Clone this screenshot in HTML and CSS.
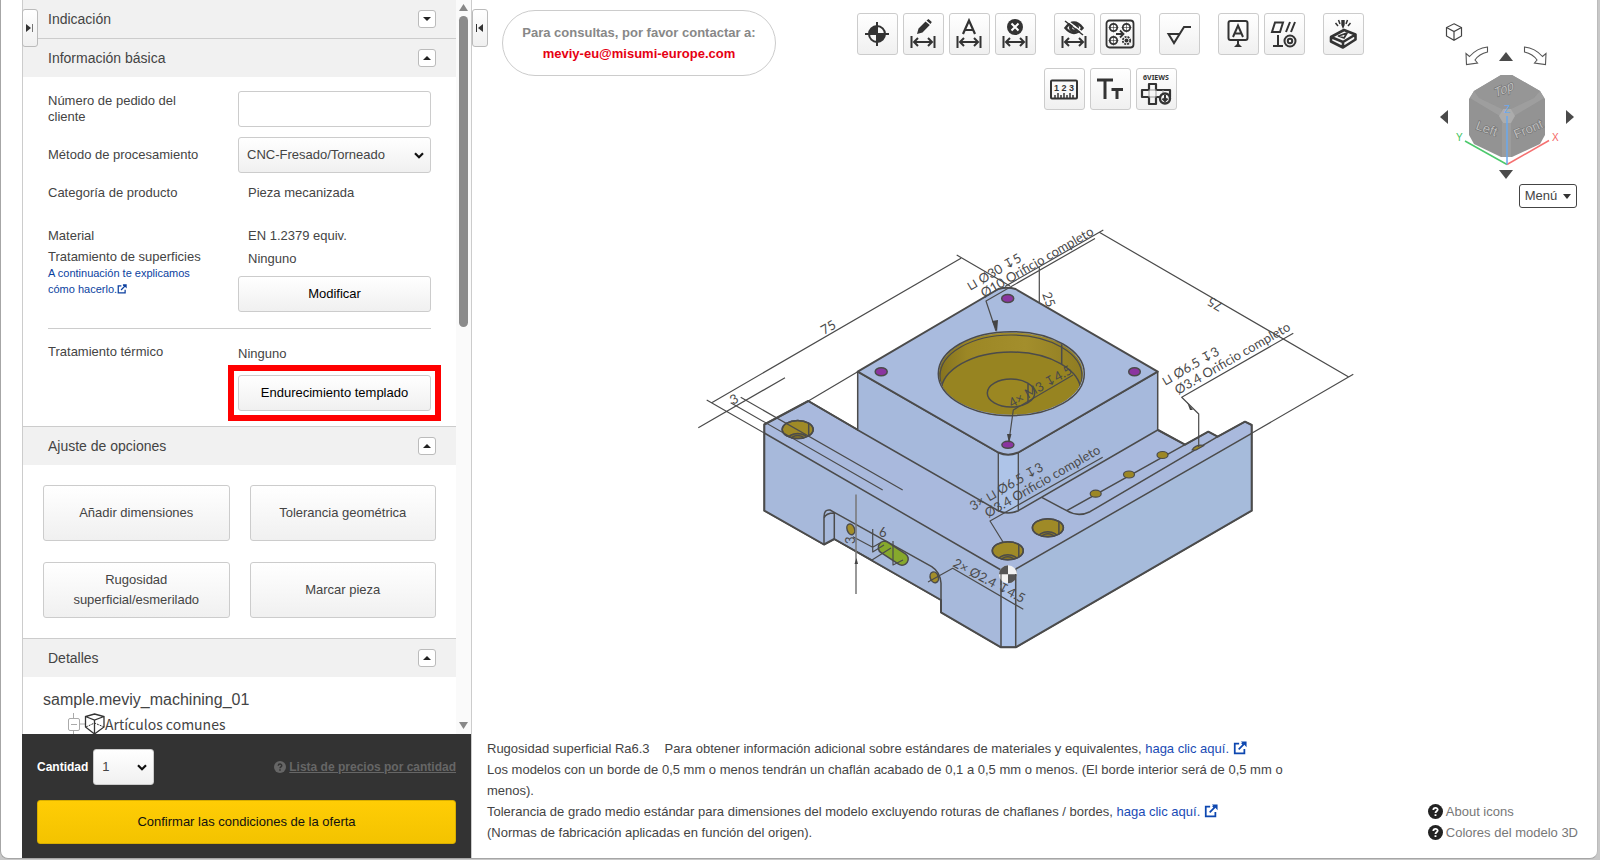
FILE: index.html
```html
<!DOCTYPE html>
<html lang="es">
<head>
<meta charset="utf-8">
<title>meviy</title>
<link rel="stylesheet" href="styles.css">
</head>
<body>
<div class="app">
  <svg class="defs" aria-hidden="true">
    <symbol id="ext" viewBox="0 0 16 16"><path d="M7 3H2v11h11V9M10 2L12 4L6.500 9.500" fill="none" stroke="currentColor" stroke-width="2"/><path d="M9 0.500H15.500V7L13.200 4.700L11.200 2.700Z" fill="currentColor"/></symbol>
    <symbol id="help" viewBox="0 0 16 16"><circle cx="8" cy="8" r="8" fill="currentColor"/><path class="help-mark" d="M5.700 6.300C5.700 3.400 10.400 3.500 10.300 6.200C10.200 7.800 8 7.700 8 9.500M8 10.900V12.900" fill="none" stroke-width="2"/></symbol>
    <symbol id="span" viewBox="0 0 32 12"><path d="M4.500 0V12M27.500 0V12M7 6H25M11 2L7 6L11 10M21 2L25 6L21 10" fill="none" stroke="currentColor" stroke-width="2"/></symbol>
  </svg>

  <aside class="panel">
    <button class="collapse collapse-left" aria-label="Mostrar panel"><svg width="8" height="8" viewBox="0 0 8 8"><path d="M0 0L5 4L0 8Z" fill="#333"/><path d="M6.500 0V8" stroke="#777"/></svg></button>
    <div class="scroll">
      <div class="sections">
        <section class="section">
          <h2 class="section-head">Indicación <button class="fold" aria-label="Abrir Indicación"><svg width="8" height="4" viewBox="0 0 8 4"><path d="M0 0H8L4 4Z" fill="#222"/></svg></button></h2>
        </section>
        <section class="section">
          <h2 class="section-head">Información básica <button class="fold" aria-label="Cerrar Información básica"><svg width="8" height="4" viewBox="0 0 8 4"><path d="M0 4H8L4 0Z" fill="#222"/></svg></button></h2>
          <div class="basic">
            <div class="row row-input"><label for="order">Número de pedido del cliente</label><input class="field" id="order" type="text"></div>
            <div class="row row-method"><label for="method">Método de procesamiento</label>
              <div class="select"><select class="field" id="method"><option>CNC-Fresado/Torneado</option></select><svg width="10" height="7" viewBox="0 0 10 7"><path d="M1 1.200L5 5.200L9 1.200" fill="none" stroke="#111" stroke-width="2.200"/></svg></div></div>
            <div class="row row-category"><span>Categoría de producto</span><span class="value">Pieza mecanizada</span></div>
            <div class="row row-material"><span>Material</span><span class="value">EN 1.2379 equiv.</span></div>
            <div class="row row-surface">
              <div>Tratamiento de superficies<a class="explain" href="#">A continuación te explicamos cómo hacerlo.<svg width="10" height="10"><use href="#ext"/></svg></a></div>
              <div class="stack"><span class="value">Ninguno</span><button class="field">Modificar</button></div>
            </div>
            <div class="row row-heat">
              <div>Tratamiento térmico</div>
              <div class="stack"><span>Ninguno</span><div class="marked"><button class="field">Endurecimiento templado</button></div></div>
            </div>
          </div>
        </section>
        <section class="section">
          <h2 class="section-head">Ajuste de opciones <button class="fold" aria-label="Cerrar Ajuste de opciones"><svg width="8" height="4" viewBox="0 0 8 4"><path d="M0 4H8L4 0Z" fill="#222"/></svg></button></h2>
          <div class="options">
            <button class="option">Añadir dimensiones</button><button class="option">Tolerancia geométrica</button>
            <button class="option">Rugosidad superficial/esmerilado</button><button class="option">Marcar pieza</button>
          </div>
        </section>
        <section class="section">
          <h2 class="section-head">Detalles <button class="fold" aria-label="Cerrar Detalles"><svg width="8" height="4" viewBox="0 0 8 4"><path d="M0 4H8L4 0Z" fill="#222"/></svg></button></h2>
          <div class="details">
            <div class="file">sample.meviy_machining_01</div>
            <div class="tree"><svg width="37" height="22" viewBox="0 0 37 22"><g fill="none" stroke="#aaa"><path d="M5.500 0V5M5.500 17V22M12 11H17"/><rect x="0.500" y="5.500" width="11" height="12" rx="1.500"/><path d="M3 11.500H9"/></g><path d="M26.500 1L36 3.500V14L26.500 21L17.500 14V3.500ZM17.500 3.500L26.500 7L36 3.500M26.500 7V21" fill="none" stroke="#333" stroke-width="1.300"/><path d="M18 14L26.500 10L36 14" fill="none" stroke="#333" stroke-dasharray="2 1"/></svg>Artículos comunes</div>
          </div>
        </section>
      </div>
      <div class="bar"><svg width="9" height="7" viewBox="0 0 9 7"><path d="M4.500 0L9 7H0Z" fill="#888"/></svg><i class="thumb"></i><svg class="down" width="9" height="7" viewBox="0 0 9 7"><path d="M4.500 7L9 0H0Z" fill="#888"/></svg></div>
    </div>
    <div class="order">
      <div class="quantity">
        <label for="qty">Cantidad</label>
        <div class="select"><select class="field" id="qty"><option>1</option></select><svg width="10" height="7" viewBox="0 0 10 7"><path d="M1 1.200L5 5.200L9 1.200" fill="none" stroke="#111" stroke-width="2.200"/></svg></div>
        <a class="prices" href="#"><svg width="12" height="12"><use href="#help"/></svg><span>Lista de precios por cantidad</span></a>
      </div>
      <button class="confirm">Confirmar las condiciones de la oferta</button>
    </div>
  </aside>

  <main class="viewer">
    <button class="collapse collapse-right" aria-label="Ocultar panel"><svg width="8" height="8" viewBox="0 0 8 8"><path d="M7 0L2 4L7 8Z" fill="#333"/><path d="M0.500 0V8" stroke="#333"/></svg></button>

    <svg class="model" viewBox="472 0 1125 858" role="img" aria-label="Modelo 3D">
      <defs>
        <linearGradient id="wall" x1="0" x2="1"><stop offset="0" stop-color="#84721f"/><stop offset=".2" stop-color="#9c8725"/><stop offset=".6" stop-color="#a38e2c"/><stop offset="1" stop-color="#8f7c22"/></linearGradient>
        <clipPath id="bore"><ellipse cx="1011" cy="373.500" rx="72" ry="41"/></clipPath>
        <clipPath id="cb"><ellipse cx="0" cy="0" rx="15.500" ry="9"/></clipPath>
        <g id="counterbore"><ellipse rx="15.500" ry="9" fill="#9f8a27"/><g clip-path="url(#cb)" fill="none"><ellipse cx="0" cy="10" rx="10" ry="6" fill="#8b7820"/><ellipse cx="0" cy="11" rx="7" ry="5"/><path d="M11 -8V7"/></g><ellipse rx="15.500" ry="9" fill="none"/></g>
      </defs>
      <g stroke="#4b4b4b" stroke-width="1.500" stroke-linejoin="round" fill="none">
        <path fill="#a9b9dd" d="M764.300 424.500L808.300 401L858 430L1158 430L1185 444.700L1208.300 431.700L1217.700 436.700L1245 421.700L1251.700 425V510.700L1015.700 647.300H1001L941 612.300V600L834.300 539L824 544.500L764.300 510.700Z"/>
        <path stroke="none" fill="#a7b9db" d="M764.300 433L1001 570V647L941 612V600L834 539L824 544L764.300 510.700Z"/>
        <path stroke="none" fill="#a6bbdb" d="M1015.700 569L1251.700 433V510.700L1015.700 647.300Z"/>
        <path fill="#adc3e8" d="M1001 570H1015.700V647.300H1001Z"/>
        <path stroke-width="2" d="M1158 430L1185 444.700L1208.300 431.700L1217.700 436.700L1245 421.700L1251.700 425V510.700L1015.700 647.300H1001L941 612.300V600L834.300 539L824 544.500L764.300 510.700V424.500L808.300 401L858 430"/>
        <path d="M764.300 433L1001 570M1015.700 569L1251.700 433.300"/>
        <path d="M1041.700 497.300L1066.700 510.700Q1078 517.500 1090 511.700L1217.700 436.700M1066.700 510.700L1185 444.700"/>
        <path d="M824 544.500V517Q824 509 830 510L834.300 512.300V539M824 518Q826 513 834 513M834.300 512.300L931.700 566.700Q940 572 941 583V600"/>
        <g fill="#9c8725" stroke-width="1.200"><ellipse cx="1095.700" cy="493.700" rx="5.500" ry="3.500"/><ellipse cx="1129" cy="474.500" rx="5.500" ry="3.500"/><ellipse cx="1162.500" cy="455" rx="5.500" ry="3.500"/><path d="M1192 450Q1196 444 1204 445.500L1196 450Z"/></g>
        <path fill="#a6b9dc" d="M857.700 371.700L998.300 452.500L1018.300 452.500L1157.700 371.700V430L1018.300 510.700Q1008 515 998.300 510.700L857.700 430Z"/>
        <path fill="#aec4e8" stroke-width="1.300" d="M998.300 452H1018.300V510.700Q1008 515 998.300 510.700Z"/>
        <path fill="#a9bbde" stroke-width="2" d="M857.700 371.700L998.300 289Q1007 286.500 1015.500 289L1157.700 371.700L1018.300 452.500Q1008 457 998.300 452.500Z"/>
        <g clip-path="url(#bore)"><ellipse cx="1011" cy="373.500" rx="73" ry="42" fill="url(#wall)"/><ellipse cx="1011" cy="392" rx="70" ry="40" fill="#978421"/><path d="M1061.700 341V364" /><ellipse cx="1011" cy="376" rx="71" ry="41" stroke-width="1.200"/></g>
        <ellipse cx="1011.300" cy="373.700" rx="73" ry="42"/>
        <ellipse cx="1011" cy="393" rx="23.700" ry="14" fill="#9b8722"/><path d="M1028 384V403"/>
        <g fill="#8b35a0"><ellipse cx="1007.700" cy="298.500" rx="6" ry="4"/><ellipse cx="881.200" cy="371.700" rx="6" ry="4"/><ellipse cx="1007.900" cy="444.800" rx="6" ry="3.500"/><ellipse cx="1134.500" cy="371.700" rx="5.800" ry="4"/></g>
        <use href="#counterbore" x="797.700" y="429.500"/><use href="#counterbore" x="1047.900" y="527.800"/><use href="#counterbore" x="1007.800" y="550.800"/>
        <g fill="#a38e2a"><ellipse cx="850.800" cy="529.300" rx="3.700" ry="5.500" transform="rotate(-20 850.800 529.300)"/><ellipse cx="934.300" cy="577.300" rx="4" ry="5.500" transform="rotate(-20 934.300 577.300)"/></g>
        <path d="M884.500 547.500L902 559" stroke-width="14" stroke-linecap="round"/><path d="M884.500 547.500L902 559" stroke="#86a82c" stroke-width="11" stroke-linecap="round"/>
        <g stroke-width="1.200">
          <path d="M711.700 402.700L961 258.300M706.700 400L764.300 433M730.700 402.700L882.700 490M740.700 397.300L902.700 490M698.300 427.700L785 377.700M956.700 255L1010 286M808.300 401L857.700 371.700"/>
          <path d="M1099.300 232.300L1348.300 376.700M1103.300 230L1005 286.500M1095 238.500L986 301L996 331M1039.300 267V302M1353.300 374.300L1251.700 433.300"/>
          <path d="M1293.300 333.300L1181.700 397.300L1198.700 414V447M1102.700 457.300L990 521L1003 542M1023.300 609.300L952.700 568.300L928 582M1073 375L1013.300 410L1009 441"/>
          <path d="M872.700 529V552L884 545M893 541V565L903 560M853 536.700L872.700 547.300L880 543M872 560L891 548M872 560L834 539"/>
        </g>
        <path d="M856 494.500V594" stroke="#777"/>
        <g fill="#444" stroke="none"><path d="M992 321L998 320L997 332ZM1007 434L1011.500 434L1009 443ZM854.500 564H858L856.500 558Z"/><path d="M1187 402L1193 410L1190 410Z"/></g>
        <circle cx="1008" cy="574.300" r="9" fill="#f2f2f2" stroke="none"/><path d="M1008 574.300V565.300A9 9 0 0 0 999 574.300ZM1008 574.300V583.300A9 9 0 0 0 1017 574.300Z" fill="#555" stroke="none"/><path d="M1001 574V585M1015.500 574V585" stroke-width="1"/>
      </g>
      <g class="dims">
        <text transform="translate(824 335) rotate(-30)">75</text>
        <text transform="translate(733 405) rotate(-30)">3</text>
        <text transform="translate(1224 304) rotate(-150)">75</text>
        <text transform="translate(1042 294) rotate(70)">25</text>
        <text transform="translate(970 291) rotate(-30)">⊔ Ø30 ↧5</text>
        <text transform="translate(984 298) rotate(-30)">Ø10 Orificio completo</text>
        <text transform="translate(1165 386) rotate(-30)">⊔ Ø6.5 ↧3</text>
        <text transform="translate(1178 395) rotate(-30)">Ø3.4 Orificio completo</text>
        <text transform="translate(973 511) rotate(-30)">3× ⊔ Ø6.5 ↧3</text>
        <text transform="translate(988 518) rotate(-30)">Ø3.4 Orificio completo</text>
        <text transform="translate(1012 408) rotate(-30)">4× M3 ↧4.5</text>
        <text transform="translate(952 566) rotate(28)">2× Ø2.4 ↧4.5</text>
        <text transform="translate(855 544) rotate(-90)">3</text>
        <text transform="translate(879 537)">6</text>
      </g>
    </svg>

    <header class="top">
      <p class="contact">Para consultas, por favor contactar a:<a href="#">meviy-eu@misumi-europe.com</a></p>
      <div class="tools">
        <div class="tool-row">
          <div class="tool-group">
            <button class="tool" aria-label="Origen"><svg viewBox="0 0 32 32"><circle cx="16" cy="16" r="8" fill="none" stroke="currentColor" stroke-width="2"/><path d="M16 16V8A8 8 0 0 0 8 16ZM16 16V24A8 8 0 0 0 24 16Z" fill="currentColor"/><path d="M16 4V28M4 16H28" stroke="currentColor" stroke-width="2"/></svg></button>
            <button class="tool" aria-label="Editar dimensiones"><svg viewBox="0 0 32 32"><path d="M10 16L11.500 10.500L18.500 3.500L22.800 7L15.500 14.500ZM19.500 2.500L21.500 1L24.800 4L23.500 6Z" fill="currentColor"/><use href="#span" y="18" width="32" height="12"/></svg></button>
            <button class="tool" aria-label="Dimensión automática"><svg viewBox="0 0 32 32"><path d="M10 16L16 2.500L22 16M12.500 12H19.500" fill="none" stroke="currentColor" stroke-width="2.200"/><use href="#span" y="18" width="32" height="12"/></svg></button>
            <button class="tool" aria-label="Borrar dimensiones"><svg viewBox="0 0 32 32"><circle cx="16" cy="9" r="8" fill="currentColor"/><path d="M12.500 5.500L19.500 12.500M19.500 5.500L12.500 12.500" stroke="#fff" stroke-width="2"/><use href="#span" y="18" width="32" height="12"/></svg></button>
          </div>
          <div class="tool-group">
            <button class="tool" aria-label="Ocultar dimensiones"><svg viewBox="0 0 32 32"><path d="M7.500 10Q16 -1 24.500 10Q16 20 7.500 10Z" fill="none" stroke="currentColor" stroke-width="2.500"/><circle cx="16" cy="9.500" r="3.500" fill="none" stroke="currentColor" stroke-width="3"/><path d="M8.500 2L26 15.500" stroke="#fff" stroke-width="1.500"/><path d="M7 3L25 17" stroke="currentColor" stroke-width="1.500"/><use href="#span" y="18" width="32" height="12"/></svg></button>
            <button class="tool" aria-label="Agrupar agujeros"><svg viewBox="0 0 32 32"><g fill="none" stroke="currentColor" stroke-width="1.800"><rect x="2.500" y="2.500" width="27" height="27" rx="3"/><circle cx="9.500" cy="9.500" r="3.700"/><circle cx="22.500" cy="9.500" r="3.700"/><circle cx="9.500" cy="22.500" r="3.700"/><circle cx="22.500" cy="22.500" r="3.700" stroke-dasharray="2 1"/><path d="M12 16H19M16 12.500L19.500 16L16 19.500"/></g><circle cx="22.500" cy="22.500" r="2" fill="currentColor"/><path d="M9.500 4.500V14.500M4.500 9.500H14.500M22.500 4.500V14.500M17.500 9.500H27.500M9.500 17.500V27.500M4.500 22.500H14.500" stroke="currentColor" stroke-width=".6"/></svg></button>
          </div>
          <div class="tool-group">
            <button class="tool" aria-label="Rugosidad"><svg viewBox="0 0 32 32"><path d="M28 9H21L11 25L5.500 16H16.500" fill="none" stroke="currentColor" stroke-width="2"/></svg></button>
          </div>
          <div class="tool-group">
            <button class="tool" aria-label="Referencia"><svg viewBox="0 0 32 32"><rect x="6.500" y="3" width="19" height="19" rx="2" fill="none" stroke="currentColor" stroke-width="2"/><path d="M11 19L16 7.500L21 19M13 15.500H19M16 22V27" fill="none" stroke="currentColor" stroke-width="2"/><path d="M12 29L16 25L20 29Z" fill="currentColor"/></svg></button>
            <button class="tool" aria-label="Tolerancia geométrica"><svg viewBox="0 0 32 32"><g fill="none" stroke="currentColor" stroke-width="2"><path d="M7 4.500H15L12 14H4ZM18 14L22 4M23 14L27 4M10 17V28M5 28H15"/><circle cx="22" cy="23" r="5.500"/><circle cx="22" cy="23" r="2.200"/></g></svg></button>
          </div>
          <div class="tool-group">
            <button class="tool" aria-label="Marcar pieza"><svg viewBox="0 0 32 32"><g fill="none" stroke="currentColor" stroke-width="2.600" stroke-linejoin="round"><path d="M4 19L17 12L28.500 16.500L16 24ZM4 19V23.500L16 29.500L28.500 21.500V16.500M16 24V29"/><path d="M11.500 18L20 15L17 20Z" stroke-width="1.800"/><path d="M8.500 5L11 8M11.500 2L13 6M23.500 5L21 8M20.500 2L19 6" stroke-width="1.500"/></g><path d="M14.300 2H17.700V7L16 11L14.300 7Z" fill="currentColor"/></svg></button>
          </div>
        </div>
        <div class="tool-row">
          <div class="tool-group">
            <button class="tool" aria-label="Medir"><svg viewBox="0 0 32 32"><rect x="3" y="7.500" width="26" height="18" rx="1" fill="none" stroke="currentColor" stroke-width="2"/><path d="M7 25V22M10 25V20M13 25V22M16 25V20M19 25V22M22 25V20M25 25V22" stroke="currentColor" stroke-width="1.500"/><text x="16" y="18" class="ruler-text">1 2 3</text></svg></button>
            <button class="tool" aria-label="Tamaño de texto"><svg viewBox="0 0 32 32"><path d="M3 7H19M11 7V26M17.500 16.500H29M23 16.500V26" stroke="currentColor" stroke-width="3" fill="none"/></svg></button>
            <button class="tool" aria-label="Seis vistas"><svg class="tall" viewBox="0 0 32 38"><text x="16" y="10" class="views-text">6VIEWS</text><path d="M9 20V14H16V20H30V27H16V34H9V27H2V20Z" fill="none" stroke="currentColor" stroke-width="2.200" stroke-linejoin="round"/><path d="M9 20H16V27H9ZM23 20V26" fill="none" stroke="#999" stroke-width="1"/><circle cx="25" cy="28.500" r="5" fill="#f6f6f6" stroke="currentColor" stroke-width="2.400"/><path d="M25 25V31M22.500 28.500L25 31L27.500 28.500" stroke="currentColor" stroke-width="2" fill="none"/></svg></button>
          </div>
        </div>
      </div>
      <nav class="cube-nav" aria-label="Orientación">
        <button class="bare home" aria-label="Vista isométrica"><svg width="18" height="18" viewBox="0 0 18 18"><path d="M9 .8L16.500 4.500V13L9 17.200L1.500 13V4.500ZM1.500 4.500L9 8.500L16.500 4.500M9 8.500V17.200" fill="none" stroke="#444" stroke-width="1.200"/></svg></button>
        <div class="turns">
          <button class="bare" aria-label="Girar a la izquierda"><svg width="24" height="20" viewBox="0 0 24 20"><path d="M22.500 1V6Q14 8 10 14L12.500 17L1.500 18.500L1 7.500L4.500 10.500Q12 2 22.500 1Z" fill="#fff" stroke="#555" stroke-width="1.100"/></svg></button>
          <button class="bare" aria-label="Arriba"><svg width="14" height="9" viewBox="0 0 14 9"><path d="M7 0L14 9H0Z" fill="#4a4a4a"/></svg></button>
          <button class="bare" aria-label="Girar a la derecha"><svg width="24" height="20" viewBox="0 0 24 20"><path d="M1.500 1V6Q10 8 14 14L11.500 17L22.500 18.500L23 7.500L19.500 10.500Q12 2 1.500 1Z" fill="#fff" stroke="#555" stroke-width="1.100"/></svg></button>
        </div>
        <div class="middle">
          <button class="bare" aria-label="Izquierda"><svg width="8" height="14" viewBox="0 0 8 14"><path d="M8 0V14L0 7Z" fill="#4a4a4a"/></svg></button>
          <svg width="110" height="102" viewBox="1452 66 110 102">
            <path d="M1501 75H1512L1540 91L1545 99V135L1540 144L1512 157H1501L1474 144L1469 135V99L1474 91Z" fill="#939393"/>
            <path d="M1474 91L1501 75H1512L1540 91L1534 98L1511 109H1502L1479 98Z" fill="#969696"/>
            <path d="M1474 91L1479 98L1502 109L1500 116L1470 98ZM1540 91L1534 98L1511 109L1514 116L1544 98Z" fill="#9e9e9e"/>
            <path d="M1502 123H1511V157H1502Z" fill="#9c9c9c"/>
            <path d="M1503 109H1511L1515 116L1511 123H1503L1499 116Z" fill="#acacac"/>
            <g class="face"><text transform="translate(1495 98) rotate(-25) skewX(-20)">Top</text><text transform="translate(1475 129) rotate(20)">Left</text><text transform="translate(1516 139) rotate(-23)">Front</text></g>
            <g fill="none" stroke-width="1.500"><path d="M1507 164.500L1465 141" stroke="#4cc96c"/><path d="M1507 164.500L1549 140.500" stroke="#f57070"/><path d="M1507 164.500V116" stroke="#6aa9ee"/></g>
            <g class="axis"><text x="1456" y="141" fill="#3cc45e">Y</text><text x="1552" y="141" fill="#f56464">X</text><text x="1504" y="113" fill="#6aa9ee">Z</text></g>
          </svg>
          <button class="bare" aria-label="Derecha"><svg width="8" height="14" viewBox="0 0 8 14"><path d="M0 0V14L8 7Z" fill="#4a4a4a"/></svg></button>
        </div>
        <button class="bare below" aria-label="Abajo"><svg width="14" height="9" viewBox="0 0 14 9"><path d="M0 0H14L7 9Z" fill="#4a4a4a"/></svg></button>
        <button class="menu">Menú <svg width="8" height="5" viewBox="0 0 8 5"><path d="M0 0H8L4 5Z" fill="#333"/></svg></button>
      </nav>
    </header>

    <footer class="bottom">
      <div class="notes">
        <p><span class="rough">Rugosidad superficial Ra6.3</span>Para obtener información adicional sobre estándares de materiales y equivalentes, <a href="#">haga clic aquí. <svg width="14" height="14"><use href="#ext"/></svg></a></p>
        <p>Los modelos con un borde de 0,5 mm o menos tendrán un chaflán acabado de 0,1 a 0,5 mm o menos. (El borde interior será de 0,5 mm o menos).</p>
        <p>Tolerancia de grado medio estándar para dimensiones del modelo excluyendo roturas de chaflanes / bordes, <a href="#">haga clic aquí. <svg width="14" height="14"><use href="#ext"/></svg></a></p>
        <p>(Normas de fabricación aplicadas en función del origen).</p>
      </div>
      <div class="links">
        <a href="#"><svg width="15" height="15"><use href="#help"/></svg>About icons</a>
        <a href="#"><svg width="15" height="15"><use href="#help"/></svg>Colores del modelo 3D</a>
      </div>
    </footer>
  </main>
</div>
</body>
</html>
```
FILE: styles.css
```css
* { box-sizing: border-box; }
body { margin: 0; background: #c8c8c8; color: #444; font: 13px/16px "Liberation Sans", Arial, sans-serif; }
h2, p { margin: 0; }
a { color: #1a4bb5; text-decoration: none; }
button, input, select { font: inherit; color: inherit; }
button { padding: 0; cursor: pointer; }
svg { flex: none; }
.defs { position: absolute; width: 0; height: 0; }

.app {
  display: flex;
  height: calc(100vh - 1px);
  min-height: 760px;
  margin-right: 2px;
  padding-left: 21px;
  background: #fff;
  border: 1px solid #a6a6a6;
  border-top: 0;
  border-right-color: #bbb;
  border-radius: 0 0 8px 8px;
  overflow: hidden;
}

.panel { position: relative; display: flex; flex-direction: column; flex: 0 0 450px; border-right: 1px solid #ccc; }
.scroll { display: flex; flex: 1; min-height: 0; overflow: hidden; border-left: 1px solid #ccc; }
.sections { flex: 1; }
.bar { display: flex; flex-direction: column; align-items: center; width: 15px; padding: 4px 0 5px; background: #fafafa; }
.thumb { width: 9px; height: 311px; margin-top: 5px; border-radius: 5px; background: #8b8b8b; }
.down { margin-top: auto; }

.collapse {
  position: absolute;
  top: 9px;
  left: 0;
  z-index: 1;
  display: flex;
  align-items: center;
  justify-content: center;
  width: 16px;
  height: 38px;
  background: linear-gradient(#fff, #f0f0f0);
  border: 1px solid #bbb;
  border-radius: 3px;
}

.section-head {
  display: flex;
  align-items: center;
  justify-content: space-between;
  height: 39px;
  padding: 0 20px 0 25px;
  background: #f1f1f1;
  border-top: 1px solid #ccc;
  font-size: 14px;
  font-weight: 400;
}
.section:first-child .section-head { height: 38px; border-top: 0; }
.fold {
  display: flex;
  align-items: center;
  justify-content: center;
  width: 18px;
  height: 18px;
  background: #fff;
  border: 1px solid #bbb;
  border-radius: 3px;
}

.basic { padding: 14px 25px 15px; }
.row { display: grid; grid-template-columns: 190px 1fr; }
.field {
  display: block;
  width: 100%;
  height: 36px;
  border: 1px solid #ccc;
  border-radius: 3px;
  background: linear-gradient(#fff, #f0f0f0);
  color: #000;
}
input.field { padding: 0 9px; background: #fff; }
.row-input label { padding: 2px 40px 0 0; }
.row-method { align-items: center; margin-top: 10px; }
.select { position: relative; }
.select select { appearance: none; padding: 0 8px; color: #444; }
.select svg { position: absolute; right: 7px; top: 15px; pointer-events: none; }
.value { padding-left: 10px; }
.row-category { margin-top: 12px; }
.row-material { margin-top: 27px; }
.row-surface { margin-top: 5px; padding-bottom: 16px; border-bottom: 1px solid #ccc; }
.explain { display: block; width: 150px; font-size: 11px; color: #0b3f9f; }
.explain svg { vertical-align: -1px; }
.stack { display: flex; flex-direction: column; gap: 9px; padding-top: 2px; }
.row-heat { margin-top: 15px; }
.row-heat .stack { gap: 13px; }
.marked { outline: 6px solid #f00; outline-offset: 4px; }

.options { display: grid; grid-template-columns: 1fr 1fr; gap: 21px 20px; padding: 20px; }
.option {
  height: 56px;
  padding: 0 20px;
  line-height: 20px;
  border: 1px solid #ccc;
  border-radius: 3px;
  background: linear-gradient(#fff, #f0f0f0);
}
.details { padding: 12px 20px; }
.file { font-size: 16px; line-height: 22px; }
.tree { display: flex; align-items: center; margin-top: 2px; padding-left: 25px; font: 14px/22px "Noto Sans CJK JP", sans-serif; }

.order { display: flex; flex-direction: column; gap: 15px; padding: 15px 15px 14px; background: #333; }
.quantity { display: flex; align-items: center; gap: 5px; color: #fff; font-size: 12px; font-weight: 700; }
.quantity .select { width: 61px; font-size: 13px; font-weight: 400; }
.prices { --mark: #333; display: flex; align-items: center; gap: 3px; margin-left: auto; color: #666; }
.prices span { text-decoration: underline; }
.help-mark { stroke: var(--mark, #fff); }
.confirm { height: 44px; border: 1px solid #d8ae00; border-radius: 3px; background: linear-gradient(#ffcd05, #f3c300); color: #111; }

.viewer { position: relative; display: flex; flex-direction: column; flex: 1; justify-content: space-between; }
.model { position: absolute; inset: 0; width: 100%; height: 100%; }
.dims { font: 13px Lato, "DejaVu Sans", sans-serif; fill: #4a4a4a; }

.top { position: relative; display: flex; align-items: flex-start; justify-content: space-between; padding: 10px 20px 0 30px; }
.contact {
  width: 274px;
  padding: 11px 0;
  border: 1px solid #ccc;
  border-radius: 33px;
  background: #fff;
  color: #888;
  font-weight: 700;
  line-height: 21px;
  text-align: center;
}
.contact a { display: block; color: #e60012; }
.tools { display: flex; flex-direction: column; align-items: center; gap: 13px; padding: 3px 0 0 4px; }
.tool-row { display: flex; gap: 18px; }
.tool-group { display: flex; gap: 5px; }
.tool {
  display: flex;
  align-items: center;
  justify-content: center;
  width: 41px;
  height: 42px;
  border: 1px solid #ccc;
  border-radius: 3px;
  background: linear-gradient(#fff, #f0f0f0);
  color: #333;
}
.tool svg { width: 32px; height: 32px; }
.tool .tall { height: 38px; }
.ruler-text { font: 700 9px "Liberation Sans", sans-serif; text-anchor: middle; fill: #333; }
.views-text { font: 700 7px "Noto Sans", sans-serif; text-anchor: middle; fill: #333; }

.cube-nav { display: flex; flex-direction: column; width: 137px; padding-top: 13px; }
.bare { display: flex; border: 0; background: none; }
.home { align-self: flex-start; margin-left: 5px; }
.turns { display: flex; align-items: center; justify-content: center; gap: 10px; margin-top: 5px; padding-right: 6px; }
.middle { display: flex; align-items: center; justify-content: space-between; padding-right: 3px; }
.below { align-self: center; margin-top: 2px; padding-right: 6px; }
.face { font: 13px "Liberation Sans", sans-serif; fill: #bdbdbd; stroke: #6e6e6e; stroke-width: 1px; paint-order: stroke; }
.axis { font: 10px "Liberation Sans", sans-serif; }
.menu {
  display: flex;
  align-items: center;
  justify-content: center;
  gap: 6px;
  align-self: flex-end;
  width: 58px;
  height: 24px;
  margin-top: 5px;
  border: 1px solid #444;
  border-radius: 3px;
  background: #fff;
}

.bottom { position: relative; display: flex; align-items: flex-end; justify-content: space-between; padding: 0 19px 15px 15px; line-height: 21px; }
.notes { width: 820px; }
.notes svg { vertical-align: -2px; color: #0d47b0; }
.rough { margin-right: 15px; }
.links { display: flex; flex-direction: column; }
.links a { display: flex; align-items: center; gap: 3px; color: #777; }
.links svg { color: #222; }
```
